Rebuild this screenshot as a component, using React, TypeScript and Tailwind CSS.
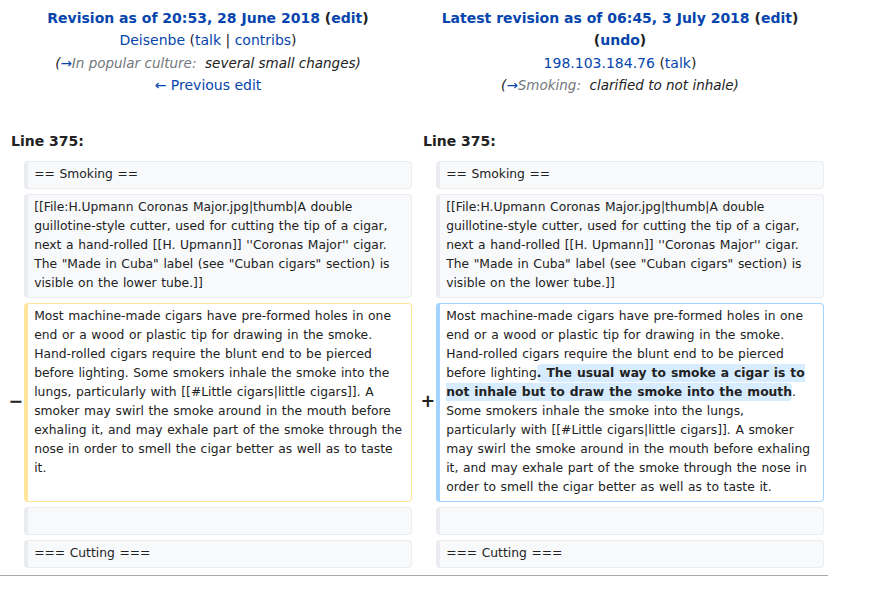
import React from "react";

const A = ({ children }: { children: React.ReactNode }) => (
  <a className="text-[#0645ad]">{children}</a>
);

const Ctx = ({ children }: { children?: React.ReactNode }) => (
  <div className="rounded-[4px] border border-l-4 border-[#eaecf0] bg-[#f8f9fa] px-[6px] pt-[3.5px] pb-[3.5px] text-[12.32px] leading-[19px] [word-spacing:0.7px] text-[#222] whitespace-pre-wrap min-h-[28px]">
    {children}
  </div>
);

export default function App() {
  return (
    <div className="bg-white min-h-[591px] w-[874px] font-['DejaVu_Sans',sans-serif] text-[#222]">
      <div className="w-[828px] border-b border-[#a2a9b1]">
        <div className="grid grid-cols-[16.16px_minmax(0,1fr)_16.16px_minmax(0,1fr)] gap-x-[4px] gap-y-[5px] px-[4px] pt-[4px] pb-[7px]">
          {/* Titles */}
          <div className="col-span-2 text-center text-[14px] leading-[22.4px] pt-[3px] pb-[3px]">
            <div className="font-bold">
              <A>Revision as of 20:53, 28 June 2018</A> (<A>edit</A>)
            </div>
            <div>
              <A>Deisenbe</A> (<A>talk</A> | <A>contribs</A>)
            </div>
            <div className="italic text-[13.5px]">
              (<A>→</A>
              <span className="text-[#72777d]">In popular culture:</span>
              {"\u00a0 "}several small changes)
            </div>
            <div>
              <A>← Previous edit</A>
            </div>
          </div>
          <div className="col-span-2 text-center text-[14px] leading-[22.4px] pt-[3px] pb-[3px]">
            <div className="font-bold">
              <A>Latest revision as of 06:45, 3 July 2018</A> (<A>edit</A>)
            </div>
            <div className="font-bold">
              (<A>undo</A>)
            </div>
            <div>
              <A>198.103.184.76</A> (<A>talk</A>)
            </div>
            <div className="italic text-[13.5px]">
              (<A>→</A>
              <span className="text-[#72777d]">Smoking:</span>
              {"\u00a0 "}clarified to not inhale)
            </div>
          </div>

          {/* Line numbers */}
          <div className="col-span-2 mt-[22.5px] px-[7px] pt-[3px] pb-[3px] text-[14px] leading-[22.4px] font-bold">
            Line 375:
          </div>
          <div className="col-span-2 mt-[22.5px] px-[7px] pt-[3px] pb-[3px] text-[14px] leading-[22.4px] font-bold">
            Line 375:
          </div>

          {/* Row: Smoking */}
          <div />
          <Ctx>== Smoking ==</Ctx>
          <div />
          <Ctx>== Smoking ==</Ctx>

          {/* Row: File */}
          <div />
          <Ctx>
            [[File:H.Upmann Coronas Major.jpg|thumb|A double guillotine-style cutter, used for cutting the tip of a cigar, next a hand-rolled [[H. Upmann]] ''Coronas Major'' cigar. The "Made in Cuba" label (see "Cuban cigars" section) is visible on the lower tube.]]
          </Ctx>
          <div />
          <Ctx>
            [[File:H.Upmann Coronas Major.jpg|thumb|A double guillotine-style cutter, used for cutting the tip of a cigar, next a hand-rolled [[H. Upmann]] ''Coronas Major'' cigar. The "Made in Cuba" label (see "Cuban cigars" section) is visible on the lower tube.]]
          </Ctx>

          {/* Row: changed */}
          <div className="flex items-center justify-end -mr-[3px] text-[17.5px] font-bold leading-none">−</div>
          <div className="rounded-[4px] border border-l-4 border-[#ffe49c] bg-white px-[6px] pt-[3.5px] pb-[3.5px] text-[12.32px] leading-[19px] [word-spacing:0.7px] text-[#222]">
            Most machine-made cigars have pre-formed holes in one end or a wood or plastic tip for drawing in the smoke. Hand-rolled cigars require the blunt end to be pierced before lighting. Some smokers inhale the smoke into the lungs, particularly with [[#Little cigars|little cigars]]. A smoker may swirl the smoke around in the mouth before exhaling it, and may exhale part of the smoke through the nose in order to smell the cigar better as well as to taste it.
          </div>
          <div className="flex items-center justify-end -mr-[3px] text-[17.5px] font-bold leading-none">+</div>
          <div className="rounded-[4px] border border-l-4 border-[#a3d3ff] bg-white px-[6px] pt-[3.5px] pb-[3.5px] text-[12.32px] leading-[19px] [word-spacing:0.7px] text-[#222]">
            Most machine-made cigars have pre-formed holes in one end or a wood or plastic tip for drawing in the smoke. Hand-rolled cigars require the blunt end to be pierced before lighting
            <span className="font-bold bg-[#d8ecff] rounded-[4px] py-[2px]">. The usual way to smoke a cigar is to not inhale but to draw the smoke into the mouth</span>
            . Some smokers inhale the smoke into the lungs, particularly with [[#Little cigars|little cigars]]. A smoker may swirl the smoke around in the mouth before exhaling it, and may exhale part of the smoke through the nose in order to smell the cigar better as well as to taste it.
          </div>

          {/* Row: empty */}
          <div />
          <Ctx />
          <div />
          <Ctx />

          {/* Row: Cutting */}
          <div />
          <Ctx>=== Cutting ===</Ctx>
          <div />
          <Ctx>=== Cutting ===</Ctx>
        </div>
      </div>
    </div>
  );
}
